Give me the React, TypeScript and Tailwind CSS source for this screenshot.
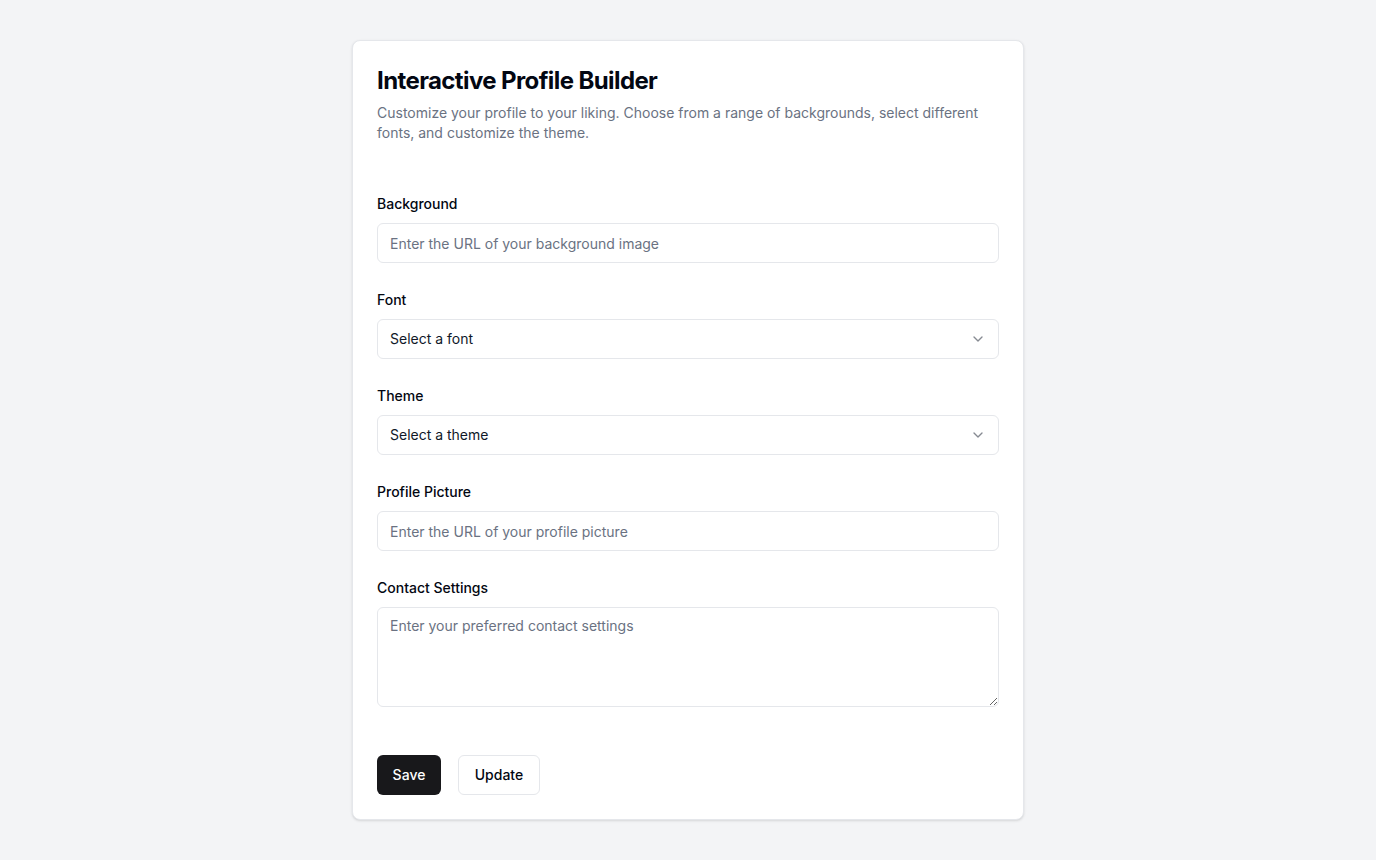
import { ChevronDown } from "lucide-react";

const Label = ({ children }: { children: React.ReactNode }) => (
  <label className="block text-sm font-medium leading-5 text-gray-950 mb-[9px]">{children}</label>
);

const inputCls =
  "w-full h-10 rounded-md border border-gray-200 bg-white px-3 text-sm text-gray-900 placeholder:text-gray-500 outline-none";

const FakeSelect = ({ placeholder }: { placeholder: string }) => (
  <button
    type="button"
    className="flex w-full h-10 items-center justify-between rounded-md border border-gray-200 bg-white px-3 text-sm text-gray-900"
  >
    <span>{placeholder}</span>
    <ChevronDown className="h-4 w-4 opacity-50" />
  </button>
);

export default function App() {
  return (
    <div
      className="min-h-screen bg-[#f3f4f6] flex justify-center pt-10"
      style={{ fontFamily: "Inter, 'Noto Sans', sans-serif" }}
    >
      <div className="w-[672px] h-fit rounded-lg border border-gray-200 bg-white shadow-sm">
        <div className="flex flex-col gap-1.5 p-6">
          <h1 className="text-2xl font-bold leading-8 tracking-tight text-gray-950">
            Interactive Profile Builder
          </h1>
          <p className="text-sm leading-5 text-gray-500">
            Customize your profile to your liking. Choose from a range of backgrounds, select different fonts, and
            customize the theme.
          </p>
        </div>
        <div className="px-6 pb-6 pt-[27px] flex flex-col gap-[27px]">
          <div>
            <Label>Background</Label>
            <input className={inputCls} placeholder="Enter the URL of your background image" />
          </div>
          <div>
            <Label>Font</Label>
            <FakeSelect placeholder="Select a font" />
          </div>
          <div>
            <Label>Theme</Label>
            <FakeSelect placeholder="Select a theme" />
          </div>
          <div>
            <Label>Profile Picture</Label>
            <input className={inputCls} placeholder="Enter the URL of your profile picture" />
          </div>
          <div>
            <Label>Contact Settings</Label>
            <textarea
              className="block w-full h-[100px] rounded-md border border-gray-200 bg-white px-3 py-2 text-sm text-gray-900 placeholder:text-gray-500 outline-none"
              placeholder="Enter your preferred contact settings"
            />
          </div>
          <div className="flex gap-[17px] pt-[21px]">
            <button className="h-10 w-16 rounded-md bg-[#18181b] text-sm font-medium text-white">Save</button>
            <button className="h-10 w-[82px] rounded-md border border-gray-200 bg-white text-sm font-medium text-gray-950">
              Update
            </button>
          </div>
        </div>
      </div>
    </div>
  );
}
